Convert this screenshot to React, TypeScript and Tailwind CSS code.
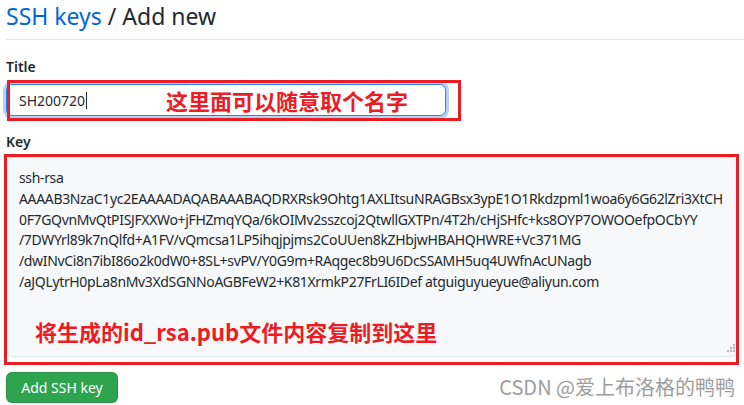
import React from "react";

const keyLines = [
  "ssh-rsa",
  "AAAAB3NzaC1yc2EAAAADAQABAAABAQDRXRsk9Ohtg1AXLItsuNRAGBsx3ypE1O1Rkdzpml1woa6y6G62lZri3XtCH",
  "0F7GQvnMvQtPISJFXXWo+jFHZmqYQa/6kOIMv2sszcoj2QtwllGXTPn/4T2h/cHjSHfc+ks8OYP7OWOOefpOCbYY",
  "/7DWYrl89k7nQlfd+A1FV/vQmcsa1LP5ihqjpjms2CoUUen8kZHbjwHBAHQHWRE+Vc371MG",
  "/dwINvCi8n7ibI86o2k0dW0+8SL+svPV/Y0G9m+RAqgec8b9U6DcSSAMH5uq4UWfnAcUNagb",
  "/aJQLytrH0pLa8nMv3XdSGNNoAGBFeW2+K81XrmkP27FrLI6IDef atguiguyueyue@aliyun.com",
];

const uiFont = "font-['Noto_Sans','Noto_Sans_CJK_SC',sans-serif]";
const noteFont = "font-['Noto_Sans_CJK_SC',sans-serif]";

function ResizeGrip() {
  return (
    <svg width="8" height="8" viewBox="0 0 8 8" className="absolute right-[2px] bottom-[4px]" aria-hidden="true">
      <rect x="6" y="0" width="2" height="2" fill="#b5b8bc" />
      <rect x="3" y="3" width="2" height="2" fill="#b5b8bc" />
      <rect x="6" y="3" width="2" height="2" fill="#b5b8bc" />
      <rect x="0" y="6" width="2" height="2" fill="#b5b8bc" />
      <rect x="3" y="6" width="2" height="2" fill="#b5b8bc" />
      <rect x="6" y="6" width="2" height="2" fill="#b5b8bc" />
    </svg>
  );
}

export default function App() {
  return (
    <div className={`relative w-[744px] h-[405px] overflow-hidden bg-white text-[#24292e] ${uiFont}`}>
      <div className="flex flex-col items-start pl-[6px]">
        <h2 className="self-stretch pt-px text-[23px] leading-[30px] font-normal pb-[8px] border-b border-[#e1e4e8]">
          <a className="text-[#0366d6]">SSH keys</a> / Add new
        </h2>

        <label className="mt-[17px] text-[14px] leading-[20px] font-semibold">Title</label>
        <div className="relative mt-[7px]">
          <div className="flex items-center w-[440px] h-[32px] rounded-[6px] border border-[#2188ff] shadow-[0_0_0_3px_rgba(3,102,214,0.3)] bg-white pl-[12px] text-[14px]">
            <span>SH200720</span>
            <span className="w-px h-[17px] bg-[#24292e] ml-[1px]" />
            <span className={`ml-[79px] text-[22px] leading-[28px] font-bold text-[#ec1c24] ${noteFont}`}>
              这里面可以随意取个名字
            </span>
          </div>
          {/* annotation frame drawn over the input */}
          <div className="absolute left-[1px] top-[-4px] w-[454px] h-[41px] border-[3px] border-[#ec1c24]" />
        </div>

        <label className="mt-[16px] text-[14px] leading-[20px] font-semibold">Key</label>
        <div className="relative mt-[5px]">
          <div className="relative flex flex-col items-start w-[732px] h-[200px] rounded-[6px] border border-[#e1e4e8] bg-[#f6f8fa] pl-[12px] pt-[10px] text-[14px] leading-[20.8px] tracking-[-0.35px]">
            {keyLines.map((line) => (
              <div key={line} className="whitespace-pre">
                {line}
              </div>
            ))}
            <div className={`mt-[24px] ml-[16px] text-[22px] leading-[28px] tracking-normal font-bold text-[#ec1c24] ${noteFont}`}>
              将生成的id_rsa.pub文件内容复制到这里
            </div>
            <ResizeGrip />
          </div>
          {/* annotation frame drawn over the textarea */}
          <div className="absolute left-[-2px] top-[-3px] w-[735px] h-[211px] border-[3px] border-[#ec1c24]" />
        </div>

        <button
          type="button"
          className="mt-[15px] w-[112px] h-[31px] rounded-[6px] bg-[#2ea44f] border border-[rgba(27,31,35,0.15)] text-white text-[14px]"
        >
          Add SSH key
        </button>
      </div>

      <div className={`absolute right-[9px] top-[374px] text-[20px] leading-[26px] text-[#9d9d9d] ${noteFont}`}>
        CSDN @爱上布洛格的鸭鸭
      </div>
    </div>
  );
}
